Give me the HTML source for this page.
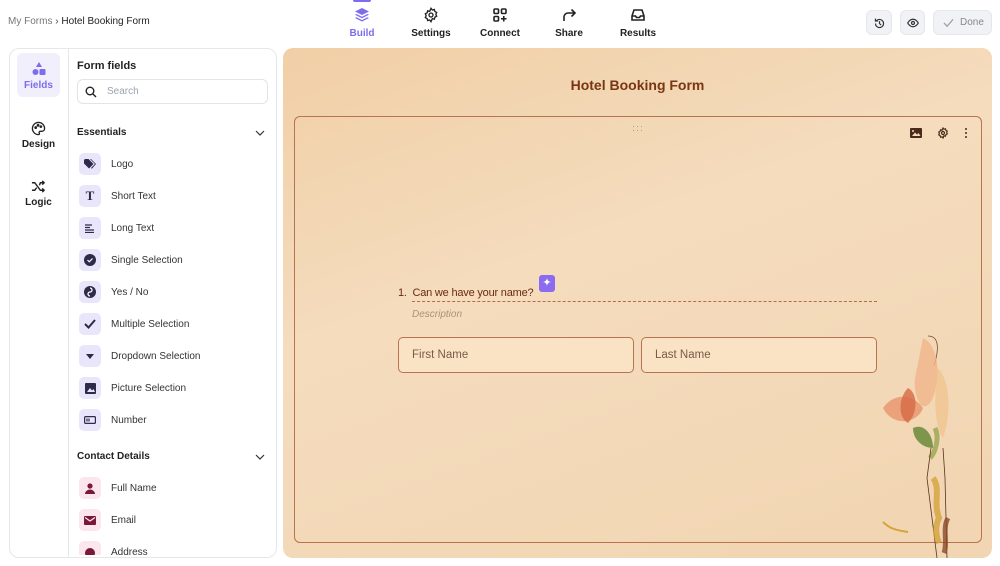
<!DOCTYPE html>
<html><head><style>
*{box-sizing:border-box;margin:0;padding:0}
body{width:1000px;height:566px;overflow:hidden;background:#fff;font-family:"Liberation Sans",sans-serif;color:#1f2937;position:relative}
.a{position:absolute}
.nav{position:absolute;top:7px;text-align:center;font-size:10px;font-weight:bold;color:#222;width:60px}
.nav svg{display:block;margin:0 auto 5px}
.btn{position:absolute;top:10px;height:25px;border-radius:6px;background:#f1f2f5;border:1px solid #e6e7eb}
.fi{position:absolute;left:79px;width:22px;height:22px;border-radius:5px;background:#e9e5fb;display:flex;align-items:center;justify-content:center}
.ft{position:absolute;left:111px;font-size:10px;color:#333}
.pk{background:#fbe6ee}
</style></head><body>
<div class="a" style="left:8px;top:16px;font-size:10px;color:#777">My Forms <span style="color:#444">›</span> <span style="color:#222">Hotel Booking Form</span></div>

<div class="a" style="left:353px;top:0;width:18px;height:2px;background:#7c6cf0;border-radius:0 0 2px 2px"></div>
<div class="nav" style="left:332px;color:#7c6cf0"><svg width="16" height="16" viewBox="0 0 16 16" fill="#7c6cf0"><path d="M8 1L15 4.5 8 8 1 4.5z"/><path d="M2.5 7L8 9.8 13.5 7 15 7.8 8 11.3 1 7.8z"/><path d="M2.5 10.2L8 13 13.5 10.2 15 11 8 14.5 1 11z"/></svg>Build</div>
<div class="nav" style="left:401px"><svg width="16" height="16" viewBox="0 0 24 24" fill="none" stroke="#222" stroke-width="2"><circle cx="12" cy="12" r="3"/><path d="M12 2l2 2.5 3-.8.8 3 2.7 1.5-1.2 2.8 1.2 2.8-2.7 1.5-.8 3-3-.8L12 22l-2-2.5-3 .8-.8-3L3.5 15.8 4.7 13 3.5 10.2 6.2 8.7l.8-3 3 .8z"/></svg>Settings</div>
<div class="nav" style="left:470px"><svg width="16" height="16" viewBox="0 0 16 16" fill="none" stroke="#222" stroke-width="1.6"><rect x="2" y="2" width="4.5" height="4.5" rx="1"/><rect x="9.5" y="2" width="4.5" height="4.5" rx="1"/><rect x="2" y="9.5" width="4.5" height="4.5" rx="1"/><path d="M11.75 9v5.5M9 11.75h5.5"/></svg>Connect</div>
<div class="nav" style="left:539px"><svg width="16" height="16" viewBox="0 0 16 16" fill="none" stroke="#222" stroke-width="1.6"><path d="M3 14V10a4 4 0 014-4h7M10.5 2.5L14 6l-3.5 3.5"/></svg>Share</div>
<div class="nav" style="left:608px"><svg width="16" height="16" viewBox="0 0 16 16" fill="none" stroke="#222" stroke-width="1.6"><path d="M2 9l2-6h8l2 6v4H2z M2 9h3.5l1 1.5h3l1-1.5H14"/></svg>Results</div>

<div class="btn" style="left:866px;width:26px"><svg class="a" style="left:6px;top:6px" width="13" height="13" viewBox="0 0 16 16" fill="none" stroke="#333" stroke-width="1.5"><path d="M3 8a5 5 0 105-5 5 5 0 00-4 2M3 2v3h3M8 5v3l2 2"/></svg></div>
<div class="btn" style="left:900px;width:25px"><svg class="a" style="left:6px;top:6px" width="12" height="12" viewBox="0 0 16 16" fill="none" stroke="#333" stroke-width="1.6"><path d="M1 8s2.5-5 7-5 7 5 7 5-2.5 5-7 5-7-5-7-5z"/><circle cx="8" cy="8" r="2"/></svg></div>
<div class="btn" style="left:933px;width:59px;font-size:10px;color:#888;padding:6px 0 0 26px">Done<svg class="a" style="left:9px;top:7px" width="11" height="10" viewBox="0 0 12 10" fill="none" stroke="#999" stroke-width="1.3"><path d="M1 5l3.5 3.5L11 1"/></svg></div>

<!-- left panel -->
<div class="a" style="left:9px;top:48px;width:268px;height:510px;border:1px solid #e5e7eb;border-radius:10px"></div>
<div class="a" style="left:68px;top:49px;width:1px;height:508px;background:#e5e7eb"></div>
<div class="a" style="left:17px;top:53px;width:43px;height:44px;background:#f0effb;border-radius:6px;text-align:center;font-size:10px;font-weight:bold;color:#7c6cf0;padding-top:9px">
<svg width="14" height="14" viewBox="0 0 14 14" fill="#7c6cf0" style="display:block;margin:0 auto 4px"><path d="M7 0L10 5H4z"/><circle cx="3.5" cy="10" r="3"/><rect x="7.5" y="7" width="6" height="6" rx="1"/></svg>Fields</div>
<div class="a" style="left:17px;top:121px;width:43px;text-align:center;font-size:10px;font-weight:bold;color:#222"><svg width="15" height="15" viewBox="0 0 16 16" fill="none" stroke="#222" stroke-width="1.4" style="display:block;margin:0 auto 3px"><path d="M8 1.5a6.5 6.5 0 000 13c1 0 1.3-.8.8-1.6-.5-.8 0-1.9 1-1.9h1.8A3 3 0 0014.5 8 6.5 6.5 0 008 1.5z"/><circle cx="5" cy="7" r=".8"/><circle cx="7.5" cy="4.6" r=".8"/><circle cx="10.5" cy="6" r=".8"/></svg>Design</div>
<div class="a" style="left:17px;top:179px;width:43px;text-align:center;font-size:10px;font-weight:bold;color:#222"><svg width="15" height="15" viewBox="0 0 16 16" fill="none" stroke="#222" stroke-width="1.5" style="display:block;margin:0 auto 3px"><path d="M1 4h3l6 8h4M1 12h3l2-2.7M9 6.7L10 4h4M12 2l2 2-2 2M12 10l2 2-2 2"/></svg>Logic</div>

<div class="a" style="left:77px;top:60px;font-size:11px;font-weight:bold;color:#222">Form fields</div>
<div class="a" style="left:77px;top:79px;width:191px;height:25px;border:1px solid #e2e4e8;border-radius:6px;font-size:10px;color:#9ca3af;padding:6px 0 0 29px">Search<svg class="a" style="left:7px;top:6px" width="12" height="12" viewBox="0 0 12 12" fill="none" stroke="#222" stroke-width="1.4"><circle cx="5" cy="5" r="3.8"/><path d="M8 8l3 3"/></svg></div>

<div class="a" style="left:77px;top:127px;font-size:10px;font-weight:bold;color:#222">Essentials</div>
<svg class="a" style="left:255px;top:130px" width="10" height="6" viewBox="0 0 10 6" fill="none" stroke="#333" stroke-width="1.2"><path d="M1 1l4 4 4-4"/></svg>

<div class="fi" style="top:153px"><svg width="12" height="10" viewBox="0 0 12 10" fill="#2d2a4a"><path d="M0 1v3.5L5 9.5 9.5 5 4.5 0H1z"/><path d="M6 0l5 5-4 4 .8.8L12 5 7 0z"/></svg></div><div class="ft" style="top:159px">Logo</div>
<div class="fi" style="top:185px;font:bold 13px 'Liberation Serif',serif;color:#2d2a4a">T</div><div class="ft" style="top:191px">Short Text</div>
<div class="fi" style="top:217px"><svg width="10" height="9" viewBox="0 0 10 9" stroke="#2d2a4a" stroke-width="1.3"><path d="M0 1h7M0 3.5h5M0 6h9M0 8.5h9"/></svg></div><div class="ft" style="top:223px">Long Text</div>
<div class="fi" style="top:249px"><svg width="12" height="12" viewBox="0 0 12 12"><circle cx="6" cy="6" r="6" fill="#2d2a4a"/><path d="M3.5 6l1.8 1.8L8.5 4.5" stroke="#fff" stroke-width="1.2" fill="none"/></svg></div><div class="ft" style="top:255px">Single Selection</div>
<div class="fi" style="top:281px"><svg width="12" height="12" viewBox="0 0 12 12"><circle cx="6" cy="6" r="6" fill="#2d2a4a"/><path d="M6 2a2 2 0 010 4 2 2 0 000 4" stroke="#fff" stroke-width="1.3" fill="none"/></svg></div><div class="ft" style="top:287px">Yes / No</div>
<div class="fi" style="top:313px"><svg width="12" height="10" viewBox="0 0 12 10" fill="none" stroke="#2d2a4a" stroke-width="2"><path d="M1 5l3.5 3.5L11 1"/></svg></div><div class="ft" style="top:319px">Multiple Selection</div>
<div class="fi" style="top:345px"><svg width="8" height="5" viewBox="0 0 8 5" fill="#2d2a4a"><path d="M0 0h8L4 5z"/></svg></div><div class="ft" style="top:351px">Dropdown Selection</div>
<div class="fi" style="top:377px"><svg width="11" height="11" viewBox="0 0 11 11"><rect width="11" height="11" rx="1" fill="#2d2a4a"/><path d="M2 9l3-4 2 2.5 1.5-1.5L10 9z" fill="#e9e5fb"/></svg></div><div class="ft" style="top:383px">Picture Selection</div>
<div class="fi" style="top:409px"><svg width="12" height="8" viewBox="0 0 12 8" fill="none" stroke="#2d2a4a" stroke-width="1.2"><rect x=".6" y=".6" width="10.8" height="6.8" rx="1"/><path d="M3 2.5v3M5 2.5v3"/></svg></div><div class="ft" style="top:415px">Number</div>

<div class="a" style="left:77px;top:451px;font-size:10px;font-weight:bold;color:#222">Contact Details</div>
<svg class="a" style="left:255px;top:454px" width="10" height="6" viewBox="0 0 10 6" fill="none" stroke="#333" stroke-width="1.2"><path d="M1 1l4 4 4-4"/></svg>
<div class="fi pk" style="top:477px"><svg width="10" height="11" viewBox="0 0 10 11" fill="#7a1838"><circle cx="5" cy="3" r="2.6"/><path d="M0 11a5 4.5 0 0110 0z"/></svg></div><div class="ft" style="top:483px">Full Name</div>
<div class="fi pk" style="top:509px"><svg width="12" height="9" viewBox="0 0 12 9" fill="#7a1838"><rect width="12" height="9" rx="1"/><path d="M1 1.5l5 3.5 5-3.5" stroke="#fbe6ee" stroke-width="1.2" fill="none"/></svg></div><div class="ft" style="top:515px">Email</div>
<div class="a" style="left:70px;top:541px;width:206px;height:14px;overflow:hidden"><div class="fi pk" style="left:9px;top:0"><div style="width:10px;height:10px;border-radius:50%;background:#7a1838;margin-top:2px"></div></div><div class="ft" style="left:41px;top:6px">Address</div></div>

<!-- canvas -->
<div class="a" style="left:283px;top:48px;width:709px;height:510px;border-radius:10px;background:linear-gradient(160deg,#f1cfa6 0%,#f4dcbd 40%,#f2d5b2 100%);overflow:hidden">
<div class="a" style="left:0;width:709px;top:29px;text-align:center;font-size:14px;font-weight:bold;color:#7a3512">Hotel Booking Form</div>
<div class="a" style="left:11px;top:68px;width:688px;height:427px;border:1px solid #b87350;border-radius:6px"></div>
<div class="a" style="left:349px;top:76px;font-size:9px;color:#999;letter-spacing:1px;line-height:4px">···<br>···</div>
<svg class="a" style="left:627px;top:80px" width="12" height="10" viewBox="0 0 12 10"><rect width="12" height="10" rx="1" fill="#4a2a1a"/><path d="M2 8l3-3.5 2 2 1.5-1.5L10.5 8z" fill="#f4dcbd"/><circle cx="3" cy="3" r="1" fill="#f4dcbd"/></svg>
<svg class="a" style="left:654px;top:79px" width="12" height="12" viewBox="0 0 24 24" fill="none" stroke="#4a2a1a" stroke-width="2.4"><circle cx="12" cy="12" r="3"/><path d="M12 2l2 2.5 3-.8.8 3 2.7 1.5-1.2 2.8 1.2 2.8-2.7 1.5-.8 3-3-.8L12 22l-2-2.5-3 .8-.8-3L3.5 15.8 4.7 13 3.5 10.2 6.2 8.7l.8-3 3 .8z"/></svg>
<div class="a" style="left:682px;top:80px;width:3px;line-height:4px;font-size:0"><div style="width:2.4px;height:2.4px;background:#4a2a1a;border-radius:50%;margin-bottom:1.6px"></div><div style="width:2.4px;height:2.4px;background:#4a2a1a;border-radius:50%;margin-bottom:1.6px"></div><div style="width:2.4px;height:2.4px;background:#4a2a1a;border-radius:50%"></div></div>

<div class="a" style="left:115px;top:239px;font-size:11px;color:#6b2a10;letter-spacing:-0.2px">1.&nbsp; Can we have your name?</div>
<div class="a" style="left:256px;top:227px;width:16px;height:17px;border-radius:3px;background:#8b6cf0;color:#fff;font-size:11px;text-align:center;line-height:17px">✦</div>
<div class="a" style="left:129px;top:253px;width:465px;border-top:1px dashed #b86a45"></div>
<div class="a" style="left:129px;top:261px;font-size:10px;font-style:italic;color:#b0907a">Description</div>
<div class="a" style="left:115px;top:289px;width:236px;height:36px;border:1px solid #b87350;border-radius:5px;background:#fae3c5;font-size:11.5px;color:#7a5a48;padding:11px 0 0 13px">First Name</div>
<div class="a" style="left:358px;top:289px;width:236px;height:36px;border:1px solid #b87350;border-radius:5px;background:#fae3c5;font-size:11.5px;color:#7a5a48;padding:11px 0 0 13px">Last Name</div>

<svg class="a" style="left:590px;top:280px" width="110" height="230" viewBox="0 0 110 230">
<path d="M55 8c10 0 12 10 6 30" stroke="#7a4a30" fill="none" stroke-width=".8"/>
<path d="M50 10c12 5 20 30 10 60-10 20-20 0-18-20z" fill="#f0b58a" opacity=".8"/>
<path d="M10 80c10-15 30-15 40 0-5 15-30 20-40 0z" fill="#e8956b" opacity=".8"/>
<path d="M35 60c10 5 10 25 0 35-10-5-10-25 0-35z" fill="#d66a45" opacity=".8"/>
<path d="M65 40c10 10 15 40 5 70-8-10-10-40-5-70z" fill="#f0c28a" opacity=".7"/>
<path d="M40 100c10-5 20 5 20 20-10 0-20-8-20-20z" fill="#6a8a3a" opacity=".85"/>
<path d="M62 100c5 10 0 25-5 30" stroke="#8aa040" stroke-width="5" fill="none" opacity=".7"/>
<path d="M58 120l-4 30 10 80M70 120l2 30 2 80" stroke="#5a3020" fill="none" stroke-width=".8"/>
<path d="M60 150c8 10 0 25 6 40-5 10-2 20 0 25" stroke="#d4a33a" stroke-width="6" fill="none" opacity=".8"/>
<path d="M75 190c-6 10 0 25-4 35" stroke="#8a4a2a" stroke-width="5" fill="none" opacity=".8"/>
<path d="M10 194c5 5 10 8 25 10" stroke="#d4a33a" stroke-width="2" fill="none"/>
</svg>
</div>
</body></html>
